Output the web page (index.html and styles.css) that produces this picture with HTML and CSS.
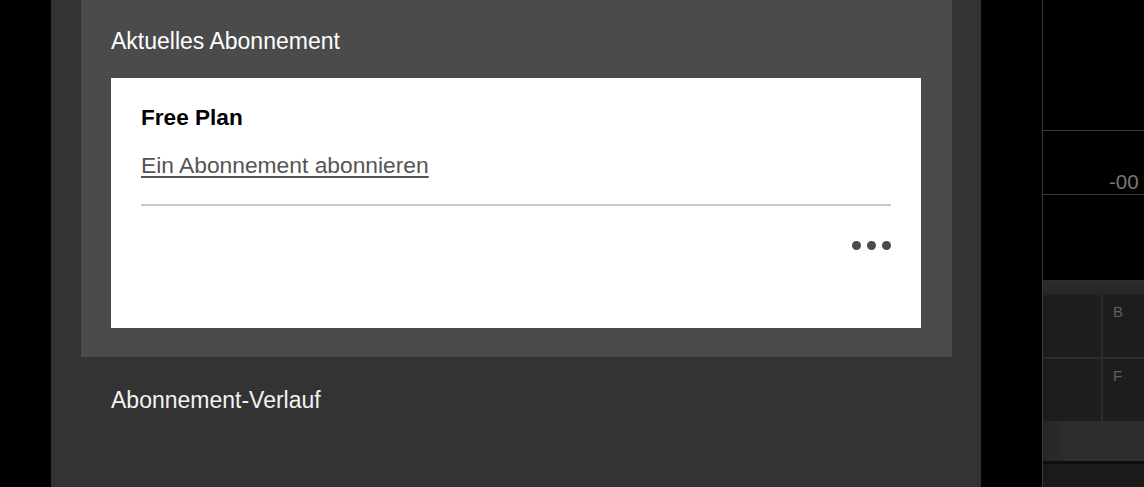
FILE: index.html
```html
<!DOCTYPE html>
<html lang="de">
<head>
<meta charset="utf-8">
<title>Abonnement</title>
<link rel="stylesheet" href="styles.css">
</head>
<body>
<div class="gutter"></div>
<main class="panel">
  <section class="current">
    <h2 class="heading">Aktuelles Abonnement</h2>
    <div class="card">
      <div class="plan-name">Free Plan</div>
      <a class="subscribe" href="#">Ein Abonnement abonnieren</a>
      <hr class="sep">
      <div class="actions">
        <span class="dot"></span><span class="dot"></span><span class="dot"></span>
      </div>
    </div>
  </section>
  <h2 class="heading history">Abonnement-Verlauf</h2>
</main>
<aside class="side">
  <div class="side-gap"></div>
  <div class="side-inner">
    <div class="top-space"></div>
    <div class="time-row"><span class="time">-00</span></div>
    <div class="mid-space"></div>
    <div class="pad">
      <div class="pad-top"></div>
      <div class="pad-grid">
        <div class="cell"></div><div class="cell"><span class="key">B</span></div>
        <div class="cell"></div><div class="cell"><span class="key">F</span></div>
      </div>
      <div class="pad-bottom"></div>
      <div class="pad-foot"></div>
    </div>
  </div>
</aside>
</body>
</html>
```
FILE: styles.css
```css
html, body {
  margin: 0;
  padding: 0;
  height: 100%;
  overflow: hidden;
  background: #000;
  font-family: "Liberation Sans", Arial, sans-serif;
}
body {
  display: flex;
  width: 1144px;
  height: 487px;
}
.gutter {
  width: 51px;
  flex: none;
  background: #000;
}
.panel {
  width: 930px;
  flex: none;
  background: #333333;
  padding-left: 30px;
  box-sizing: border-box;
}
.current {
  width: 871px;
  background: #4b4b4b;
  padding: 28px 31px 29px 30px;
  box-sizing: border-box;
}
.heading {
  margin: 0;
  font-weight: normal;
  font-size: 23px;
  line-height: 26px;
  color: #fff;
}
.current .heading {
  margin-bottom: 24px;
}
.history {
  margin: 30px 0 0 30px;
  color: #f2f2f2;
}
.card {
  background: #fff;
  height: 250px;
  box-sizing: border-box;
  padding: 27px 30px 0 30px;
}
.plan-name {
  font-weight: bold;
  font-size: 22.6px;
  line-height: 26px;
  color: #000;
}
.subscribe {
  display: inline-block;
  margin-top: 21px;
  font-size: 22.8px;
  line-height: 26px;
  color: #555;
  text-decoration: underline;
  text-decoration-color: #555;
  text-underline-offset: 3px;
}
.sep {
  margin: 26px 0 0;
  border: 0;
  height: 2px;
  background: #c8c8c8;
}
.actions {
  display: flex;
  justify-content: flex-end;
  gap: 6px;
  margin-top: 35px;
}
.dot {
  width: 9px;
  height: 9px;
  border-radius: 50%;
  background: #4a4a4a;
}
.side {
  flex: 1;
  display: flex;
  background: #000;
}
.side-gap {
  width: 61px;
  flex: none;
  border-right: 1px solid #3a3a3a;
}
.side-inner {
  flex: 1;
  display: flex;
  flex-direction: column;
  overflow: hidden;
}
.top-space {
  height: 130px;
  flex: none;
  border-bottom: 1px solid #3c3c3c;
}
.time-row {
  height: 64px;
  flex: none;
  border-bottom: 1px solid #3c3c3c;
  box-sizing: border-box;
  padding: 41px 0 0 66px;
  white-space: nowrap;
  overflow: hidden;
}
.time {
  font-size: 20.5px;
  line-height: 20px;
  color: #777;
  display: block;
}
.mid-space {
  height: 85px;
  flex: none;
}
.pad {
  flex: 1;
  display: flex;
  flex-direction: column;
  background: #1b1b1b;
}
.pad-top {
  height: 15px;
  background: linear-gradient(#2e2e2e, #262626);
}
.pad-grid {
  display: grid;
  grid-template-columns: 58px 1fr;
  gap: 2px;
  background: #2c2c2c;
}
.cell {
  height: 62px;
  background: #1d1d1d;
  box-sizing: border-box;
  padding: 8px 0 0 10px;
}
.key {
  font-size: 15px;
  color: #606060;
}
.pad-bottom {
  height: 40px;
  background: linear-gradient(90deg, #262626, #2d2d2d 25%);
}
.pad-foot {
  flex: 1;
  border-top: 3px solid #0e0e0e;
  background: #1a1a1a;
}
```
